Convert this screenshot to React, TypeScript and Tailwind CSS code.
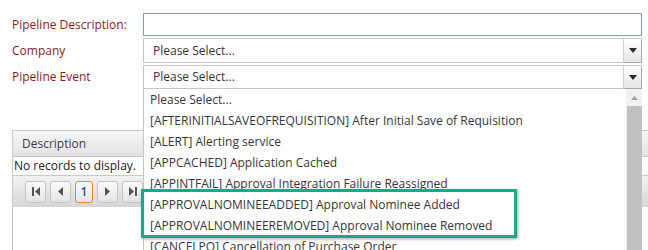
import React from 'react';

const LABEL = 'text-[12px] text-[#8e1b1b] leading-none';

const options = [
  'Please Select...',
  '[AFTERINITIALSAVEOFREQUISITION] After Initial Save of Requisition',
  '[ALERT] Alerting service',
  '[APPCACHED] Application Cached',
  '[APPINTFAIL] Approval Integration Failure Reassigned',
  '[APPROVALNOMINEEADDED] Approval Nominee Added',
  '[APPROVALNOMINEEREMOVED] Approval Nominee Removed',
  '[CANCELPO] Cancellation of Purchase Order',
  '[CHANGEORDER] Change Order',
];

const ArrowBtn = () => (
  <div className="w-[18px] h-full flex items-center justify-center border-l border-[#d0d0d0] bg-gradient-to-b from-[#ffffff] to-[#e6e6e6] shadow-[1px_1px_1px_rgba(0,0,0,0.15)]">
    <svg width="8" height="5" viewBox="0 0 8 5">
      <path d="M0 0 H8 L4 5 Z" fill="#2b2b2b" />
    </svg>
  </div>
);

const PagerBtn = ({ children, active }: { children: React.ReactNode; active?: boolean }) => (
  <div
    className={`h-[22px] flex items-center justify-center rounded-[3px] border bg-gradient-to-b from-[#fbfbfb] to-[#e3e3e3] ${
      active ? 'w-[18px] border-[#e08a3c] text-[#2f4f7f] text-[12px] font-semibold' : 'w-[21px] border-[#c4c4c4]'
    }`}
  >
    {children}
  </div>
);

export default function App() {
  return (
    <div
      className="relative w-[648px] h-[250px] overflow-hidden bg-white"
      style={{ fontFamily: '"Open Sans", "Noto Sans", sans-serif' }}
    >
      {/* Form rows */}
      <div className="pt-[13px] pr-[6px] flex flex-col gap-[2px]">
        <div className="flex items-center">
          <div className={`w-[143px] pl-[12px] ${LABEL}`}>Pipeline Description:</div>
          <div className="flex-1 h-[23px] border border-[#7f9db9]" />
        </div>
        <div className="flex items-center">
          <div className={`w-[143px] pl-[12px] ${LABEL}`}>Company</div>
          <div className="flex-1 h-[25px] border border-[#c8c8c8] flex items-center">
            <span className="flex-1 pl-[9px] text-[12px] text-[#333]">Please Select...</span>
            <ArrowBtn />
          </div>
        </div>
        <div className="flex items-center">
          <div className={`w-[143px] pl-[12px] ${LABEL}`}>Pipeline Event</div>
          <div className="flex-1 h-[24px] border border-[#c8c8c8] flex items-center">
            <span className="flex-1 pl-[9px] text-[12px] text-[#333]">Please Select...</span>
            <ArrowBtn />
          </div>
        </div>
      </div>

      {/* Grid behind the dropdown */}
      <div className="mt-[41px] ml-[12px] w-[700px] border-l border-t border-[#c8c8c8]">
        <div className="h-[26px] flex items-center pl-[9px] bg-gradient-to-b from-[#f7f7f7] to-[#e2e2e2] border-b border-[#c8c8c8] text-[12px] text-[#3d3b4a]">
          Description
        </div>
        <div className="h-[18px] flex items-center pl-[1px] text-[12px] text-[#222]">No records to display.</div>
        <div className="h-[32px] flex items-center gap-[4px] pl-[12px] bg-gradient-to-b from-[#f2f2f2] to-[#d6d6d6] border-t border-[#c8c8c8]">
          <PagerBtn>
            <svg width="8" height="9" viewBox="0 0 8 9"><path d="M0 0 H2 V9 H0 Z M8 0 V9 L3 4.5 Z" fill="#555" /></svg>
          </PagerBtn>
          <PagerBtn>
            <svg width="5" height="9" viewBox="0 0 5 9"><path d="M5 0 V9 L0 4.5 Z" fill="#555" /></svg>
          </PagerBtn>
          <PagerBtn active>1</PagerBtn>
          <PagerBtn>
            <svg width="5" height="9" viewBox="0 0 5 9"><path d="M0 0 V9 L5 4.5 Z" fill="#555" /></svg>
          </PagerBtn>
          <PagerBtn>
            <svg width="8" height="9" viewBox="0 0 8 9"><path d="M0 0 V9 L5 4.5 Z M6 0 H8 V9 H6 Z" fill="#555" /></svg>
          </PagerBtn>
        </div>
        <div className="h-[60px]" />
      </div>

      {/* Open dropdown list */}
      <div className="absolute left-[143px] top-[89px] w-[499px] h-[200px] bg-white border-l border-[#c8c8c8] flex">
        <div className="flex-1 pl-[6px]">
          {options.map((o) => (
            <div key={o} className="h-[21px] leading-[21px] text-[12px] text-[#363440] whitespace-nowrap">
              {o}
            </div>
          ))}
        </div>
        <div className="w-[16px] h-full bg-[#f1f1f1] flex flex-col items-center">
          <div className="h-[17px] flex items-center justify-center">
            <svg width="7" height="4" viewBox="0 0 7 4"><path d="M0 4 H7 L3.5 0 Z" fill="#a3a3a3" /></svg>
          </div>
          <div className="w-[15px] flex-1 bg-[#c1c1c1]" />
        </div>
      </div>

      {/* Highlight box */}
      <div className="absolute left-[141px] top-[189px] w-[376px] h-[49px] border-[3px] border-[#1ea68a] shadow-[1px_1px_3px_rgba(0,0,0,0.35)]" />
    </div>
  );
}
